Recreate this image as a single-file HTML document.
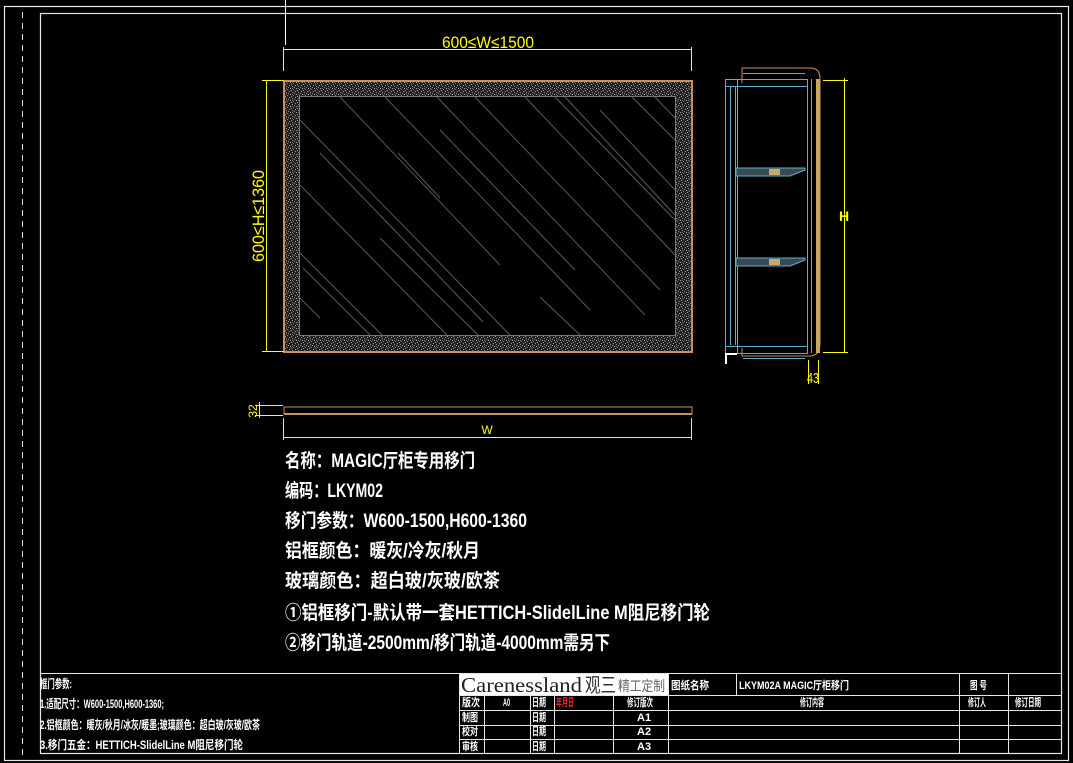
<!DOCTYPE html>
<html><head><meta charset="utf-8"><style>
html,body{margin:0;padding:0;background:#000;}
svg{display:block}
text{font-family:"Liberation Sans","Noto Sans CJK SC",sans-serif;}
</style></head><body>
<svg width="1073" height="763" viewBox="0 0 1073 763" xmlns="http://www.w3.org/2000/svg">
<defs>
<pattern id="spk" width="6" height="6" patternUnits="userSpaceOnUse">
<rect width="6" height="6" fill="#222"/>
<rect x="1" y="1" width="1" height="1" fill="#999"/><rect x="4" y="2" width="1" height="1" fill="#888"/>
<rect x="2" y="4" width="1" height="1" fill="#aaa"/><rect x="5" y="5" width="1" height="1" fill="#777"/>
<rect x="0" y="3" width="1" height="1" fill="#888"/><rect x="3" y="0" width="1" height="1" fill="#999"/>
<rect x="4" y="4" width="1" height="1" fill="#666"/>
</pattern>
</defs>
<g fill="none" stroke="#e6e6e6" stroke-width="1.2">
<rect x="4.5" y="6.5" width="1064" height="754"/>
<rect x="40.5" y="13.5" width="1021" height="740"/>
</g>
<line x1="22.5" y1="12" x2="22.5" y2="760" stroke="#ddd" stroke-dasharray="6,5"/>
<line x1="285.5" y1="0" x2="285.5" y2="45" stroke="#fff"/>

<rect x="284" y="81" width="408" height="271" fill="url(#spk)" stroke="#c8905a" stroke-width="2"/>
<rect x="299.5" y="96.5" width="376" height="239" fill="#000" stroke="#777" stroke-width="1"/>
<g stroke="#5a5a5a" stroke-width="1">
<line x1="340" y1="97" x2="500" y2="265"/><line x1="385" y1="97" x2="590" y2="310"/>
<line x1="437" y1="97" x2="645" y2="315"/><line x1="475" y1="97" x2="660" y2="290"/>
<line x1="525" y1="97" x2="675" y2="255"/><line x1="565" y1="97" x2="675" y2="215"/>
<line x1="632" y1="97" x2="675" y2="140"/><line x1="655" y1="97" x2="675" y2="118"/>
<line x1="555" y1="97" x2="675" y2="220"/><line x1="600" y1="110" x2="675" y2="190"/>
<line x1="300" y1="120" x2="510" y2="335"/><line x1="320" y1="153" x2="483" y2="322"/>
<line x1="300" y1="185" x2="447" y2="335"/><line x1="440" y1="130" x2="575" y2="270"/>
<line x1="398" y1="153" x2="440" y2="198"/><line x1="380" y1="238" x2="478" y2="335"/>
<line x1="300" y1="253" x2="382" y2="335"/><line x1="303" y1="268" x2="370" y2="335"/>
<line x1="540" y1="297" x2="580" y2="335"/><line x1="300" y1="298" x2="320" y2="318"/>
</g>
<g stroke="#ffff00" stroke-width="1" fill="none">
<line x1="283" y1="49.5" x2="692" y2="49.5"/>
<line x1="283.5" y1="47" x2="283.5" y2="71"/><line x1="691.5" y1="47" x2="691.5" y2="71"/>
<line x1="266.5" y1="80" x2="266.5" y2="352"/>
<line x1="262" y1="80.5" x2="284" y2="80.5"/><line x1="262" y1="351.5" x2="284" y2="351.5"/>
<line x1="283" y1="437.5" x2="692" y2="437.5"/>
<line x1="283.5" y1="418" x2="283.5" y2="440"/><line x1="691.5" y1="418" x2="691.5" y2="440"/>
<line x1="255" y1="405.5" x2="283" y2="405.5"/><line x1="255" y1="415.5" x2="283" y2="415.5"/>
<line x1="259.5" y1="402" x2="259.5" y2="418"/>
</g>
<text x="488" y="48" fill="#ffff00" font-size="17" text-anchor="middle" textLength="92" lengthAdjust="spacingAndGlyphs">600≤W≤1500</text>
<text transform="translate(264,216) rotate(-90)" fill="#ffff00" font-size="17" text-anchor="middle" textLength="92" lengthAdjust="spacingAndGlyphs">600≤H≤1360</text>
<text x="487" y="434" fill="#ffff00" font-size="12" text-anchor="middle">W</text>
<text transform="translate(257,411) rotate(-90)" fill="#ffff00" font-size="12" text-anchor="middle">32</text>
<rect x="284" y="407" width="408" height="7" fill="none" stroke="#c8905a" stroke-width="1"/>
<rect x="284" y="413" width="408" height="2" fill="#c8905a"/>

<g fill="none" stroke-width="1">
<path d="M742 83 V68 H810 Q820 68 820 78 V342 Q820 356 810 356 H742 V348" stroke="#c8905a"/>
<rect x="725.5" y="79.5" width="82" height="274" stroke="#5ab0d0"/>
<line x1="730.5" y1="86" x2="730.5" y2="345" stroke="#5ab0d0"/>
<line x1="735.5" y1="86" x2="735.5" y2="345" stroke="#5ab0d0"/>
<line x1="725" y1="86.5" x2="808" y2="86.5" stroke="#5ab0d0"/>
<line x1="725" y1="346.5" x2="808" y2="346.5" stroke="#5ab0d0"/>
<line x1="737.5" y1="79" x2="737.5" y2="353" stroke="#c8905a"/>
<line x1="743" y1="73.5" x2="805" y2="73.5" stroke="#5ab0d0"/>
<line x1="743" y1="358.5" x2="805" y2="358.5" stroke="#5ab0d0"/>
<line x1="811.5" y1="79" x2="811.5" y2="353" stroke="#c8905a"/>
<line x1="844.5" y1="78" x2="844.5" y2="353" stroke="#ffff00"/>
<line x1="823" y1="80.5" x2="848" y2="80.5" stroke="#ffff00"/>
<line x1="823" y1="352.5" x2="848" y2="352.5" stroke="#ffff00"/>
<line x1="808.5" y1="360" x2="808.5" y2="384" stroke="#ffff00"/>
<line x1="818.5" y1="360" x2="818.5" y2="384" stroke="#ffff00"/>
</g>
<rect x="816" y="79" width="4" height="274" fill="#c8a860"/>
<rect x="725" y="353" width="2" height="11" fill="#fff"/>
<rect x="725" y="353" width="12" height="2" fill="#fff"/>
<path d="M736 168 H805 V170 L790 176 H736 Z" fill="#3a4a52" stroke="#5ab0d0"/>
<rect x="769" y="169" width="11" height="6" fill="#c8a870"/>
<path d="M736 258 H805 V260 L790 266 H736 Z" fill="#3a4a52" stroke="#5ab0d0"/>
<rect x="769" y="259" width="11" height="6" fill="#c8a870"/>
<text x="844" y="221" fill="#ffff00" font-size="14" font-weight="bold" text-anchor="middle">H</text>
<text x="813" y="383" fill="#ffff00" font-size="15" text-anchor="middle" textLength="12" lengthAdjust="spacingAndGlyphs">43</text>

<g fill="#fff" font-size="19" font-weight="bold">
<text x="285" y="467" textLength="190" lengthAdjust="spacingAndGlyphs">名称：MAGIC厅柜专用移门</text>
<text x="285" y="497" textLength="98" lengthAdjust="spacingAndGlyphs">编码：LKYM02</text>
<text x="285" y="527" textLength="242" lengthAdjust="spacingAndGlyphs">移门参数：W600-1500,H600-1360</text>
<text x="285" y="557" textLength="195" lengthAdjust="spacingAndGlyphs">铝框颜色：暖灰/冷灰/秋月</text>
<text x="285" y="587" textLength="215" lengthAdjust="spacingAndGlyphs">玻璃颜色：超白玻/灰玻/欧茶</text>
<text x="285" y="619" textLength="425" lengthAdjust="spacingAndGlyphs">①铝框移门-默认带一套HETTICH-SlidelLine M阻尼移门轮</text>
<text x="285" y="649" textLength="325" lengthAdjust="spacingAndGlyphs">②移门轨道-2500mm/移门轨道-4000mm需另下</text>
</g>

<g stroke="#e6e6e6" stroke-width="1" fill="none">
<line x1="40" y1="673.5" x2="1062" y2="673.5"/>
<line x1="459.5" y1="673" x2="459.5" y2="754"/>
<line x1="459" y1="695.5" x2="1062" y2="695.5"/>
<line x1="459" y1="710.5" x2="1062" y2="710.5"/>
<line x1="459" y1="725.5" x2="1062" y2="725.5"/>
<line x1="459" y1="739.5" x2="1062" y2="739.5"/>
<line x1="484.5" y1="695" x2="484.5" y2="754"/>
<line x1="530.5" y1="695" x2="530.5" y2="754"/>
<line x1="554.5" y1="695" x2="554.5" y2="754"/>
<line x1="613.5" y1="695" x2="613.5" y2="754"/>
<line x1="668.5" y1="673" x2="668.5" y2="754"/>
<line x1="736.5" y1="673" x2="736.5" y2="695"/>
<line x1="959.5" y1="673" x2="959.5" y2="754"/>
<line x1="1008.5" y1="673" x2="1008.5" y2="754"/>
</g>
<rect x="460" y="674" width="208" height="21" fill="#fff"/>
<text x="461" y="692" font-size="21" fill="#222" textLength="121" lengthAdjust="spacingAndGlyphs" style="font-family:'Liberation Serif',serif">Carenessland</text>
<text x="585" y="692" font-size="20" fill="#333" textLength="31" lengthAdjust="spacingAndGlyphs">观三</text>
<text x="618" y="691" font-size="14" fill="#666" textLength="47" lengthAdjust="spacingAndGlyphs">精工定制</text>
<g fill="#fff" font-size="11" font-weight="bold">
<text x="671" y="689" textLength="38" lengthAdjust="spacingAndGlyphs">图纸名称</text>
<text x="739" y="689" textLength="110" lengthAdjust="spacingAndGlyphs">LKYM02A  MAGIC厅柜移门</text>
<text x="970" y="689" textLength="17" lengthAdjust="spacingAndGlyphs">图 号</text>
<text x="462" y="706" textLength="18" lengthAdjust="spacingAndGlyphs">版次</text>
<text x="503" y="706" textLength="7" lengthAdjust="spacingAndGlyphs">A0</text>
<text x="532" y="706" textLength="14" lengthAdjust="spacingAndGlyphs">日期</text>
<text x="556" y="706" fill="#ff2020" textLength="18" lengthAdjust="spacingAndGlyphs">年月日</text>
<text x="627" y="706" textLength="26" lengthAdjust="spacingAndGlyphs">修订版次</text>
<text x="800" y="706" textLength="24" lengthAdjust="spacingAndGlyphs">修订内容</text>
<text x="968" y="706" textLength="18" lengthAdjust="spacingAndGlyphs">修订人</text>
<text x="1015" y="706" textLength="26" lengthAdjust="spacingAndGlyphs">修订日期</text>
<text x="462" y="721" textLength="16" lengthAdjust="spacingAndGlyphs">制图</text>
<text x="532" y="721" textLength="14" lengthAdjust="spacingAndGlyphs">日期</text>
<text x="637" y="721">A1</text>
<text x="462" y="735" textLength="16" lengthAdjust="spacingAndGlyphs">校对</text>
<text x="532" y="735" textLength="14" lengthAdjust="spacingAndGlyphs">日期</text>
<text x="637" y="735">A2</text>
<text x="462" y="750" textLength="16" lengthAdjust="spacingAndGlyphs">审核</text>
<text x="532" y="750" textLength="14" lengthAdjust="spacingAndGlyphs">日期</text>
<text x="637" y="750">A3</text>
</g>
<g fill="#fff" font-size="12" font-weight="bold">
<text x="40" y="688" textLength="32" lengthAdjust="spacingAndGlyphs">框门参数:</text>
<text x="40" y="708" textLength="124" lengthAdjust="spacingAndGlyphs">1.适配尺寸：W600-1500,H600-1360;</text>
<text x="40" y="729" textLength="220" lengthAdjust="spacingAndGlyphs">2.铝框颜色：暖灰/秋月/冰灰/暖墨;玻璃颜色：超白玻/灰玻/欧茶</text>
<text x="40" y="749" textLength="203" lengthAdjust="spacingAndGlyphs">3.移门五金：HETTICH-SlidelLine M阻尼移门轮</text>
</g>
</svg>
</body></html>
